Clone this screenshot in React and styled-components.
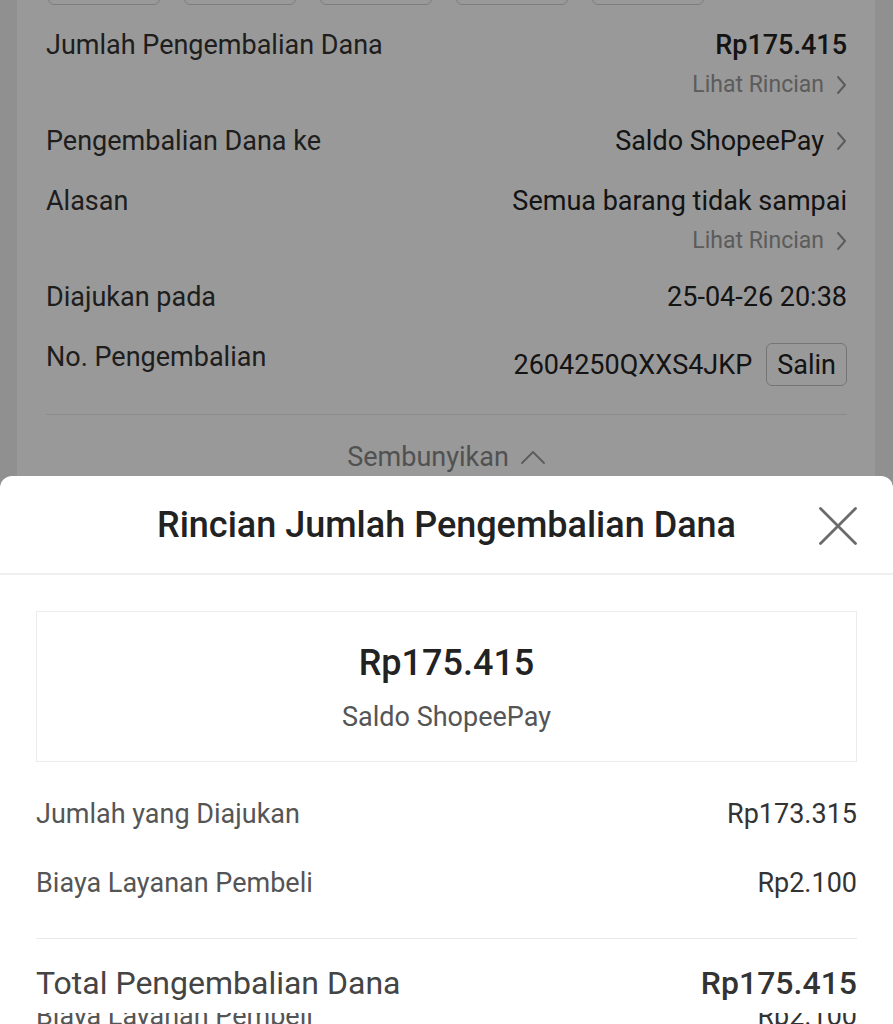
import React from "react";
import styled, { createGlobalStyle } from "styled-components";

const Global = createGlobalStyle`
  html, body { margin: 0; padding: 0; }
  body { font-family: Roboto, "Noto Sans", "Liberation Sans", sans-serif; background: #f0f0f0; }
`;

const Page = styled.div`
  position: relative;
  width: 893px;
  height: 1024px;
  overflow: hidden;
  background: #f0f0f0;
`;

const Card = styled.div`
  margin: -37px 18px 0 17px;
  background: #ffffff;
  padding: 0 28px 0 29px;
  display: flex;
  flex-direction: column;
`;

const ChipRow = styled.div`
  display: flex;
  gap: 24px;
  padding: 0 2px;
  height: 44px;
`;

const Chip = styled.div`
  width: 112px;
  height: 42px;
  border: 1px solid #d0d0d0;
  border-radius: 6px;
  box-sizing: border-box;
`;

const Rows = styled.div`
  display: flex;
  flex-direction: column;
  gap: 24px;
  padding-top: 20px;
`;

const Row = styled.div`
  display: flex;
  justify-content: space-between;
  align-items: flex-start;
  font-size: 27px;
  line-height: 36px;
  color: #333;
`;

const Label = styled.div`
  color: #333;
`;

const ValueCol = styled.div`
  display: flex;
  flex-direction: column;
  align-items: flex-end;
`;

const Value = styled.div`
  display: flex;
  align-items: center;
  gap: 12px;
  color: #222;
  font-weight: ${(p) => (p.$bold ? 500 : 400)};
`;

const Sub = styled.div`
  display: flex;
  align-items: center;
  gap: 12px;
  margin-top: 8px;
  font-size: 23px;
  line-height: 28px;
  color: #999;
`;

const Chevron = ({ color = "#999" }) => (
  <svg width="11" height="20" viewBox="0 0 11 20" fill="none">
    <path d="M2 2 L9 10 L2 18" stroke={color} strokeWidth="2" strokeLinecap="round" strokeLinejoin="round" />
  </svg>
);

const CopyWrap = styled.div`
  display: flex;
  align-items: center;
  gap: 14px;
  margin-top: 4px;
`;

const CopyBtn = styled.div`
  height: 43px;
  padding: 0 10px;
  border: 1.5px solid #c4c4c4;
  border-radius: 6px;
  box-sizing: border-box;
  display: flex;
  align-items: center;
  font-size: 27px;
  color: #222;
`;

const Divider = styled.div`
  height: 1px;
  background: ${(p) => p.$color || "#e8e8e8"};
  margin: ${(p) => p.$margin || "0"};
`;

const Toggle = styled.div`
  display: flex;
  justify-content: center;
  align-items: center;
  gap: 11px;
  height: 84px;
  font-size: 27px;
  color: #888;
`;

const Overlay = styled.div`
  position: absolute;
  inset: 0;
  background: rgba(0, 0, 0, 0.4);
`;

const Sheet = styled.div`
  position: absolute;
  left: 0;
  right: 0;
  top: 476px;
  bottom: 0;
  background: #fff;
  border-radius: 12px 12px 0 0;
  display: flex;
  flex-direction: column;
  overflow: hidden;
`;

const SheetHeader = styled.div`
  position: relative;
  height: 97px;
  display: flex;
  align-items: center;
  justify-content: center;
  border-bottom: 2px solid #efefef;
  flex-shrink: 0;
`;

const Title = styled.h2`
  margin: 0;
  font-size: 36px;
  font-weight: 500;
  color: #222;
`;

const Close = styled.button`
  position: absolute;
  right: 35px;
  top: 30px;
  width: 40px;
  height: 40px;
  padding: 0;
  border: none;
  background: transparent;
  display: flex;
  align-items: center;
  justify-content: center;
`;

const SheetBody = styled.div`
  padding: 36px 36px 0 36px;
  display: flex;
  flex-direction: column;
`;

const AmountBox = styled.div`
  height: 151px;
  border: 1px solid #ececec;
  box-sizing: border-box;
  display: flex;
  flex-direction: column;
  align-items: center;
  padding-top: 30px;
`;

const Amount = styled.div`
  font-size: 36px;
  line-height: 42px;
  font-weight: 500;
  color: #222;
`;

const AmountSub = styled.div`
  margin-top: 16px;
  font-size: 27px;
  line-height: 34px;
  color: #555;
`;

const DetailList = styled.div`
  display: flex;
  flex-direction: column;
  gap: 35px;
  padding-top: 35px;
`;

const DetailRow = styled.div`
  display: flex;
  justify-content: space-between;
  align-items: center;
  font-size: ${(p) => (p.$total ? "32px" : "27px")};
  line-height: 34px;
  color: ${(p) => (p.$total ? "#444" : "#555")};
`;

const DetailValue = styled.span`
  color: #333;
  font-weight: ${(p) => (p.$bold ? 500 : 400)};
`;

const Ghost = styled.div`
  height: 11px;
  overflow: hidden;
  margin-top: 13px;
`;

const GhostInner = styled(DetailRow)`
  margin-top: -14px;
`;

export default function App() {
  return (
    <Page>
      <Global />
      <Card>
        <ChipRow>
          <Chip />
          <Chip />
          <Chip />
          <Chip />
          <Chip />
        </ChipRow>
        <Rows>
          <Row>
            <Label>Jumlah Pengembalian Dana</Label>
            <ValueCol>
              <Value $bold>Rp175.415</Value>
              <Sub>
                Lihat Rincian <Chevron color="#999" />
              </Sub>
            </ValueCol>
          </Row>
          <Row>
            <Label>Pengembalian Dana ke</Label>
            <Value>
              Saldo ShopeePay <Chevron color="#999" />
            </Value>
          </Row>
          <Row>
            <Label>Alasan</Label>
            <ValueCol>
              <Value>Semua barang tidak sampai</Value>
              <Sub>
                Lihat Rincian <Chevron color="#999" />
              </Sub>
            </ValueCol>
          </Row>
          <Row>
            <Label>Diajukan pada</Label>
            <Value>25-04-26 20:38</Value>
          </Row>
          <Row>
            <Label>No. Pengembalian</Label>
            <CopyWrap>
              <Value>2604250QXXS4JKP</Value>
              <CopyBtn>Salin</CopyBtn>
            </CopyWrap>
          </Row>
        </Rows>
        <Divider $margin="28px 0 0 0" />
        <Toggle>
          Sembunyikan
          <svg width="26" height="16" viewBox="0 0 26 16" fill="none">
            <path d="M2 14 L13 3 L24 14" stroke="#999" strokeWidth="1.8" strokeLinecap="round" strokeLinejoin="round" />
          </svg>
        </Toggle>
      </Card>
      <Overlay />
      <Sheet>
        <SheetHeader>
          <Title>Rincian Jumlah Pengembalian Dana</Title>
          <Close aria-label="Tutup">
            <svg width="38" height="38" viewBox="0 0 38 38" fill="none">
              <path d="M1.5 1.5 L36.5 36.5 M36.5 1.5 L1.5 36.5" stroke="#6a6a6a" strokeWidth="2.8" strokeLinecap="round" />
            </svg>
          </Close>
        </SheetHeader>
        <SheetBody>
          <AmountBox>
            <Amount>Rp175.415</Amount>
            <AmountSub>Saldo ShopeePay</AmountSub>
          </AmountBox>
          <DetailList>
            <DetailRow>
              <span>Jumlah yang Diajukan</span>
              <DetailValue>Rp173.315</DetailValue>
            </DetailRow>
            <DetailRow>
              <span>Biaya Layanan Pembeli</span>
              <DetailValue>Rp2.100</DetailValue>
            </DetailRow>
          </DetailList>
          <Divider $margin="38px 0 27px 0" $color="#eaeaea" />
          <DetailRow $total>
            <span>Total Pengembalian Dana</span>
            <DetailValue $bold>Rp175.415</DetailValue>
          </DetailRow>
          <Ghost>
            <GhostInner>
              <span>Biaya Layanan Pembeli</span>
              <DetailValue>Rp2.100</DetailValue>
            </GhostInner>
          </Ghost>
        </SheetBody>
      </Sheet>
    </Page>
  );
}
